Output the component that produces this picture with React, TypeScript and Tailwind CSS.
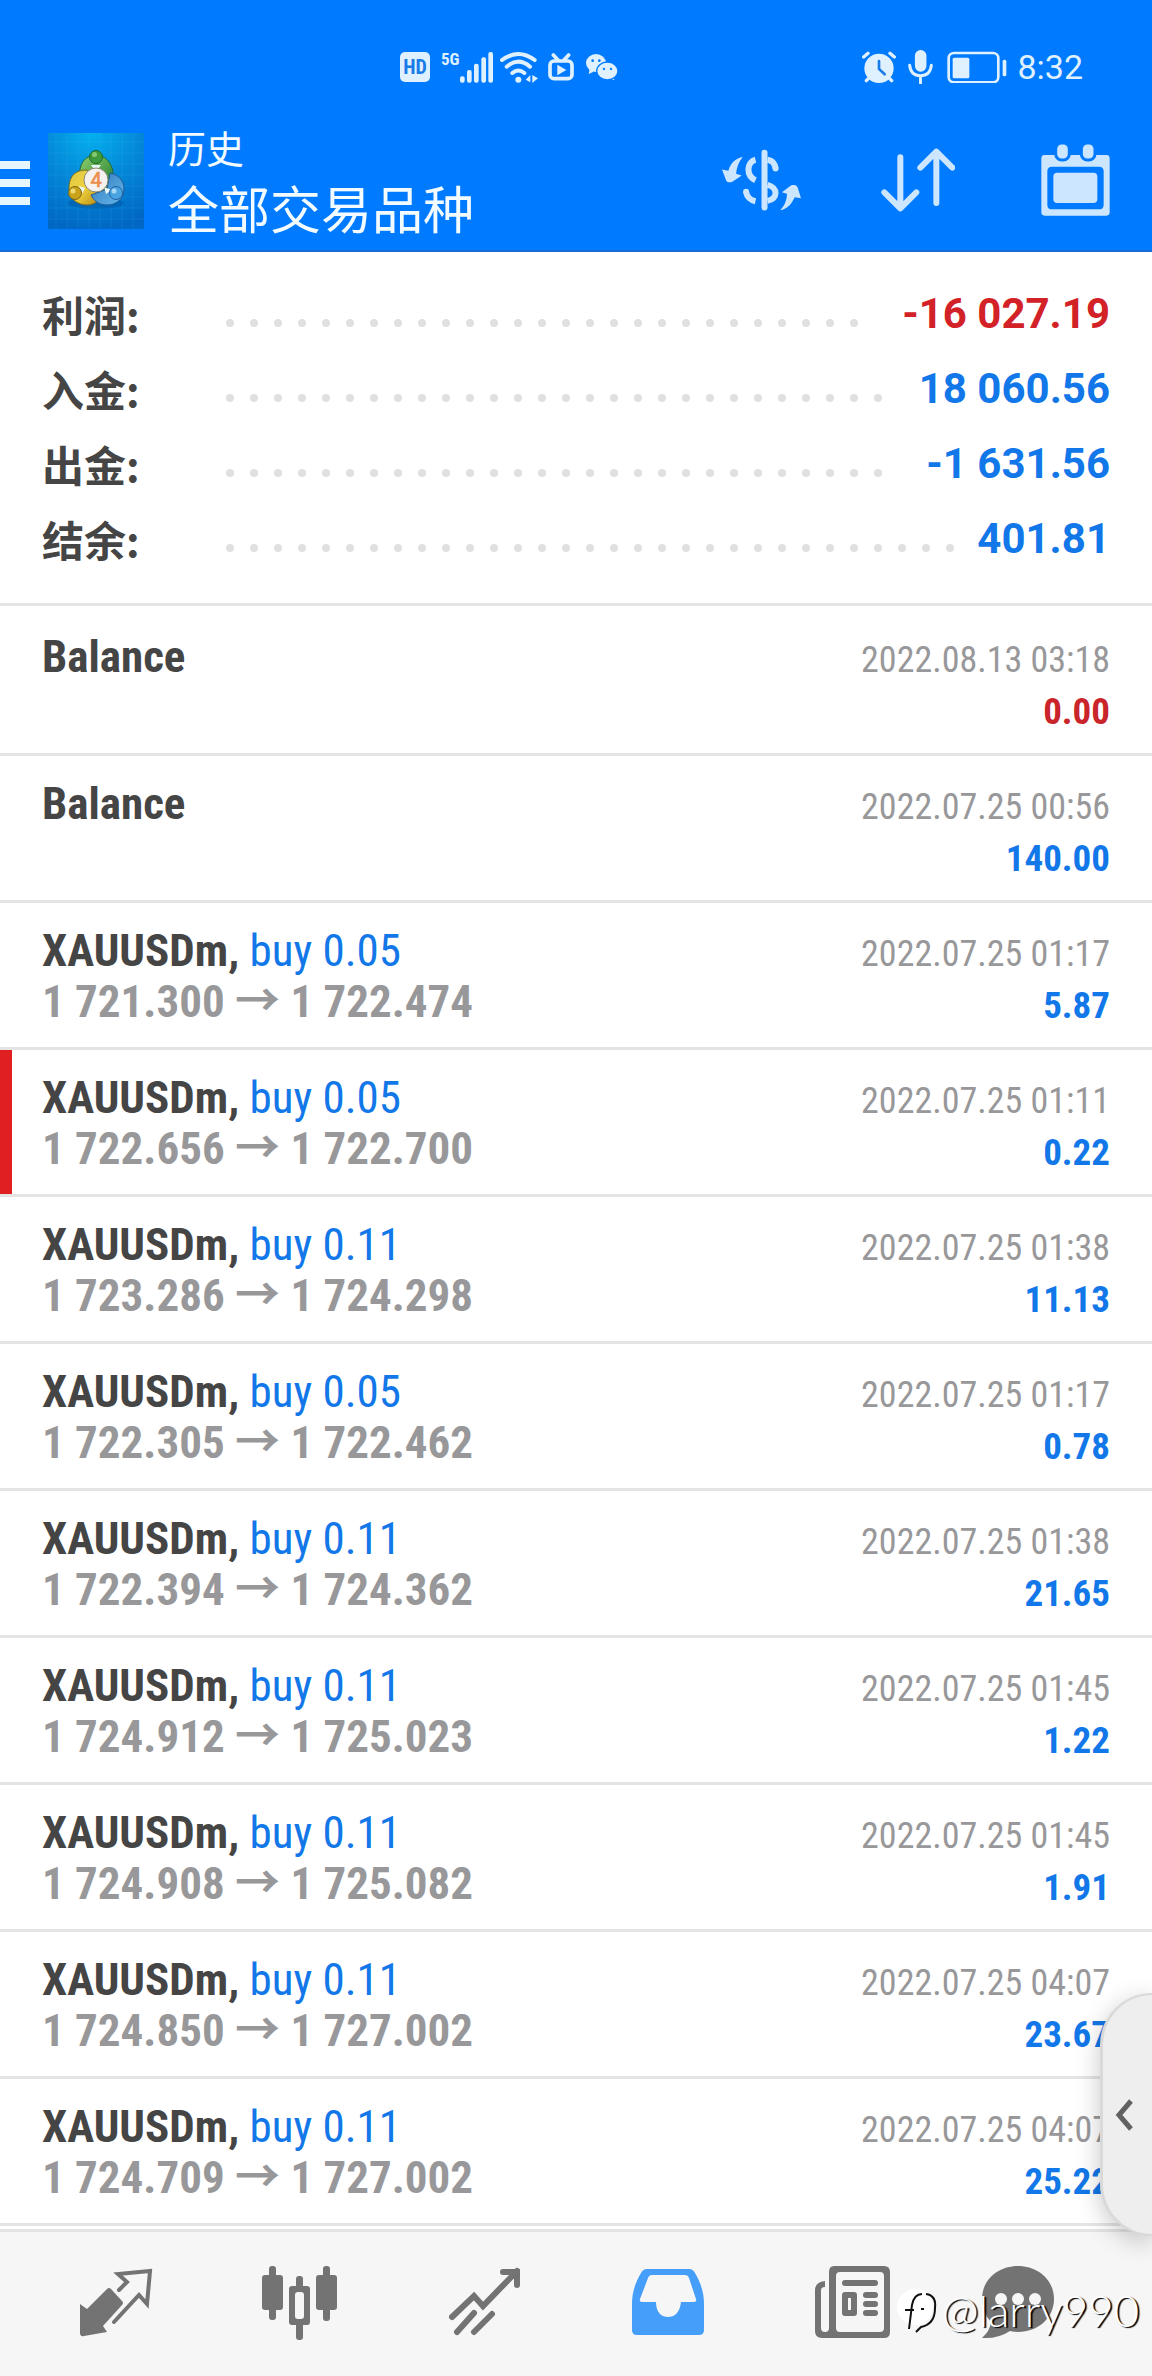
import React from 'react';
import clsx from 'clsx';

interface SummaryItem {
  label: string;
  value: string;
  negative?: boolean;
}

interface HistoryItem {
  id: number;
  title: string;
  action?: string;
  open?: string;
  close?: string;
  time: string;
  profit: string;
  loss?: boolean;
  stopLoss?: boolean;
}

const summary: SummaryItem[] = [
  { label: '利润:', value: '-16 027.19', negative: true },
  { label: '入金:', value: '18 060.56' },
  { label: '出金:', value: '-1 631.56' },
  { label: '结余:', value: '401.81' },
];

const history: HistoryItem[] = [
  { id: 1, title: 'Balance', time: '2022.08.13 03:18', profit: '0.00', loss: true },
  { id: 2, title: 'Balance', time: '2022.07.25 00:56', profit: '140.00' },
  { id: 3, title: 'XAUUSDm,', action: 'buy 0.05', open: '1 721.300', close: '1 722.474', time: '2022.07.25 01:17', profit: '5.87' },
  { id: 4, title: 'XAUUSDm,', action: 'buy 0.05', open: '1 722.656', close: '1 722.700', time: '2022.07.25 01:11', profit: '0.22', stopLoss: true },
  { id: 5, title: 'XAUUSDm,', action: 'buy 0.11', open: '1 723.286', close: '1 724.298', time: '2022.07.25 01:38', profit: '11.13' },
  { id: 6, title: 'XAUUSDm,', action: 'buy 0.05', open: '1 722.305', close: '1 722.462', time: '2022.07.25 01:17', profit: '0.78' },
  { id: 7, title: 'XAUUSDm,', action: 'buy 0.11', open: '1 722.394', close: '1 724.362', time: '2022.07.25 01:38', profit: '21.65' },
  { id: 8, title: 'XAUUSDm,', action: 'buy 0.11', open: '1 724.912', close: '1 725.023', time: '2022.07.25 01:45', profit: '1.22' },
  { id: 9, title: 'XAUUSDm,', action: 'buy 0.11', open: '1 724.908', close: '1 725.082', time: '2022.07.25 01:45', profit: '1.91' },
  { id: 10, title: 'XAUUSDm,', action: 'buy 0.11', open: '1 724.850', close: '1 727.002', time: '2022.07.25 04:07', profit: '23.67' },
  { id: 11, title: 'XAUUSDm,', action: 'buy 0.11', open: '1 724.709', close: '1 727.002', time: '2022.07.25 04:07', profit: '25.22' },
];

const StatusBar = () => (
  <div className="flex h-[108px] items-center justify-between pt-[26px] pr-[69px] pl-[400px] text-[#dff1ff]">
    <div className="flex items-center">
      <span className="flex size-[30px] items-center justify-center rounded-[5px] bg-[#dff1ff] text-[20px] leading-none font-bold text-[#1a7ce8] font-['Roboto_Condensed','Roboto',sans-serif]">
        HD
      </span>
      <span className="ml-[11px] self-start text-[17px] leading-none font-bold font-['Roboto_Condensed','Roboto',sans-serif]">5G</span>
      <svg className="w-[33px]" viewBox="233 66 99 93" fill="currentColor" aria-hidden="true">
        <rect x="233" y="139" width="14" height="19" rx="6" />
        <rect x="254" y="120" width="14" height="38" rx="6" />
        <rect x="275" y="101" width="14" height="57" rx="6" />
        <rect x="297" y="82" width="14" height="76" rx="6" />
        <rect x="318" y="66" width="14" height="92" rx="6" />
      </svg>
      <svg className="ml-[7px] w-[38px]" viewBox="359 62 114 98" fill="none" stroke="currentColor" strokeWidth="12" strokeLinecap="round" aria-hidden="true">
        <path d="M365 89Q414 53 463 89M379 109Q414 79 449 109M396 128Q414 113 432 128" />
        <circle cx="414" cy="148" r="9" fill="currentColor" stroke="none" />
        <path d="M450 134v22l-14-8zM456 134l17 10-17 14z" fill="currentColor" stroke="none" />
      </svg>
      <svg className="ml-[10px] w-[26px]" viewBox="504 68 78 84" fill="none" stroke="currentColor" strokeWidth="11" strokeLinecap="round" aria-hidden="true">
        <rect x="510" y="92" width="66" height="53" rx="12" />
        <path d="M520 74l14 15M566 74l-14 15" />
        <path d="M532 103l27 16-27 16z" fill="currentColor" stroke="none" />
      </svg>
      <svg className="ml-[12px] w-[32px]" viewBox="622 68 96 84" aria-hidden="true">
        <path d="M633 116l-3 15 15-7z" fill="currentColor" />
        <ellipse cx="652" cy="98" rx="30" ry="27" fill="currentColor" />
        <path d="M700 138l8 12-18-6z" fill="currentColor" />
        <ellipse cx="686" cy="122" rx="32" ry="27" fill="currentColor" stroke="#007aff" strokeWidth="4" />
        <g fill="#007aff">
          <circle cx="642" cy="91" r="4" />
          <circle cx="662" cy="91" r="4" />
          <circle cx="676" cy="116" r="3.5" />
          <circle cx="697" cy="116" r="3.5" />
        </g>
      </svg>
    </div>
    <div className="flex items-center">
      <svg className="w-[34px]" viewBox="66 62 102 94" stroke="currentColor" strokeWidth="10" strokeLinecap="round" fill="none" aria-hidden="true">
        <circle cx="117" cy="114" r="44" fill="currentColor" stroke="none" />
        <path d="M71 80l13-11M163 80l-13-11M88 142l-9 9M146 142l9 9" />
        <path d="M117 92v24l17 16" stroke="#1a7ce8" strokeWidth="8" />
      </svg>
      <svg className="ml-[12px] w-[25px]" viewBox="203 60 76 104" fill="none" stroke="currentColor" strokeWidth="9" strokeLinecap="round" aria-hidden="true">
        <rect x="224" y="60" width="35" height="66" rx="17" fill="currentColor" stroke="none" />
        <path d="M208 106c2 22 15 32 33 32s31-10 33-32M241 138v22" />
      </svg>
      <svg className="ml-[14px] w-[60px]" viewBox="320 62 180 98" fill="none" stroke="currentColor" strokeWidth="8" aria-hidden="true">
        <rect x="325" y="68" width="149" height="88" rx="16" />
        <rect x="337" y="82" width="50" height="62" rx="5" fill="currentColor" stroke="none" />
        <rect x="487" y="88" width="11" height="50" rx="5" fill="currentColor" stroke="none" />
      </svg>
      <span className="ml-[10px] text-[34px] leading-none">8:32</span>
    </div>
  </div>
);

const AppLogo = () => (
  <svg className="size-24" viewBox="0 0 96 96" role="img" aria-label="MetaTrader 4">
    <defs>
      <radialGradient id="logo-bg" cx="0.45" cy="0" r="1">
        <stop offset="0" stopColor="#04b0ee" />
        <stop offset="0.5" stopColor="#0488d8" />
        <stop offset="1" stopColor="#0068c4" />
      </radialGradient>
      <linearGradient id="logo-green" x1="0" y1="0" x2="1" y2="1">
        <stop offset="0" stopColor="#8fd070" />
        <stop offset="1" stopColor="#1f7a2a" />
      </linearGradient>
      <linearGradient id="logo-yellow" x1="0" y1="0" x2="1" y2="1">
        <stop offset="0" stopColor="#d8c84a" />
        <stop offset="0.5" stopColor="#f2d23c" />
        <stop offset="1" stopColor="#b08a18" />
      </linearGradient>
      <linearGradient id="logo-blue" x1="0" y1="0" x2="1" y2="1">
        <stop offset="0" stopColor="#2f78b8" />
        <stop offset="1" stopColor="#66b8ee" />
      </linearGradient>
    </defs>
    <rect width="96" height="96" fill="url(#logo-bg)" />
    <path
      d="M8 0v96M19 0v96M30 0v96M41 0v96M52 0v96M63 0v96M74 0v96M85 0v96M0 9h96M0 20h96M0 31h96M0 42h96M0 53h96M0 64h96M0 75h96M0 86h96"
      stroke="#5cc8f5"
      strokeOpacity="0.12"
    />
    <ellipse cx="48" cy="70" rx="28" ry="6" fill="#004a90" fillOpacity="0.35" />
    <path d="M32 45C30 30 38 22 48 22s19 10 17 26l-8 10H40z" fill="url(#logo-green)" stroke="#1c6a38" />
    <path d="M39 37c-16 0-18 11-18 19 0 10 9 16 18 16 5 0 9-2 12-5L43 45z" fill="url(#logo-yellow)" stroke="#7a6a20" />
    <path d="M62 40c10 2 14 9 14 16 0 10-8 16-17 16-8 0-13-4-16-10l16-6z" fill="url(#logo-blue)" stroke="#1d5a94" />
    <path d="M43 32l10 0-5 7zM31 53l6 2-3 6zM56 54l8 3-6 4z" fill="#e8f6f8" />
    <circle cx="48" cy="24" r="6.5" fill="#3f9a3c" stroke="#1f6a2c" />
    <circle cx="46.5" cy="21.5" r="2.5" fill="#a4dc8c" fillOpacity="0.7" />
    <circle cx="27" cy="60" r="6.5" fill="#c9a21c" stroke="#7d6414" />
    <circle cx="25" cy="58" r="2.5" fill="#f7e88c" fillOpacity="0.8" />
    <circle cx="68" cy="60" r="6.5" fill="#4aa4e2" stroke="#1d62a4" />
    <circle cx="66" cy="58" r="2.5" fill="#bfe4fa" fillOpacity="0.8" />
    <circle cx="48" cy="47" r="12" fill="#f4f1ee" stroke="#8a8a70" />
    <text x="48" y="54" textAnchor="middle" fontSize="20" fontFamily="Roboto, sans-serif" fill="#ec8d4c" stroke="#ec8d4c" strokeWidth="0.6">
      4
    </text>
  </svg>
);

const Toolbar = () => (
  <div className="flex h-[144px] items-center border-b-2 border-[#1b6bd3] pt-[3px] pr-[42px]">
    <button type="button" aria-label="菜单" className="flex w-[30px] flex-col gap-[10px] pt-1">
      <span className="h-2 bg-[#e6f6ff]" />
      <span className="h-2 bg-[#e6f6ff]" />
      <span className="h-2 bg-[#e6f6ff]" />
    </button>
    <div className="ml-[18px]">
      <AppLogo />
    </div>
    <div className="ml-6 flex-1 pb-2 whitespace-nowrap text-[#f2fbff] font-['Noto_Sans_CJK_SC',sans-serif]">
      <p className="text-[38px] leading-[60px]">历史</p>
      <h1 className="text-[51px] leading-[60px]">全部交易品种</h1>
    </div>
    <div className="flex items-center gap-20 text-[#cde6ff]">
      <button type="button" aria-label="货币">
        <svg className="w-[79px]" viewBox="98 78 236 192" fill="none" stroke="currentColor" strokeWidth="18">
          <path d="M225 92v164" strokeLinecap="round" />
          <path d="M198 113c-27 7-29 48 0 61M234 188c32 8 32 42 0 48" />
          <path d="M170 209c2 15 14 25 28 28M234 113c14 2 22 11 24 26" />
          <circle cx="170" cy="209" r="9" fill="currentColor" stroke="none" />
          <circle cx="258" cy="139" r="9" fill="currentColor" stroke="none" />
          <path
            d="M160 105c-20 3-36 17-43 41l-19-4 12 32c4 8 12 8 20 4l27-18-17-5c2-20 8-35 20-50zM272 264c20-3 34-18 43-39l19 3-10-32c-4-8-12-8-20-6l-27 20 15 5c0 20-8 37-20 49z"
            fill="currentColor"
            stroke="none"
          />
        </svg>
      </button>
      <button type="button" aria-label="排序">
        <svg className="w-[74px]" viewBox="572 82 222 192" fill="none" stroke="currentColor" strokeWidth="18" strokeLinecap="round" strokeLinejoin="round">
          <path d="M630 110v153M582 215l48 48 48-48M738 247V93M690 141l48-48 48 48" />
        </svg>
      </button>
      <button type="button" aria-label="日期" className="ml-[6px]">
        <svg className="w-[69px]" viewBox="1049 69 207 217" fill="currentColor">
          <path fillRule="evenodd" d="M1060 102h185q10 0 10 10v162q0 10-10 10h-185q-10 0-10-10V112q0-10 10-10zm22 35q-14 0-14 14v100q0 14 14 14h141q14 0 14-14V151q0-14-14-14z" />
          <rect x="1086" y="155" width="132" height="91" rx="12" />
          <rect x="1093" y="66" width="41" height="51" rx="18" stroke="#007aff" strokeWidth="9" />
          <rect x="1170" y="66" width="41" height="51" rx="18" stroke="#007aff" strokeWidth="9" />
        </svg>
      </button>
    </div>
  </div>
);

// the leader only shows whole dots, the rest wraps out of sight
const DotLeader = () => (
  <span aria-hidden="true" className="mt-[18px] mr-[22px] flex h-2 flex-1 flex-wrap gap-4 overflow-hidden">
    {Array.from({ length: 60 }, (_, i) => (
      <span key={i} className="size-2 rounded-full bg-[#e0e0e0]" />
    ))}
  </span>
);

const Summary = () => (
  <dl className="border-b-[3px] border-[#e4e4e4] px-[42px] pt-6 pb-[27px]">
    {summary.map((item) => (
      <div key={item.label} className="flex h-[75px] items-center">
        <dt className="w-[184px] text-[42px] leading-[75px] font-bold text-[#454545] font-['Noto_Sans_CJK_SC',sans-serif]">
          {item.label}
        </dt>
        <DotLeader />
        <dd className={clsx('text-[42px] leading-[75px] font-bold', item.negative ? 'text-[#d22227]' : 'text-[#1277e8]')}>
          {item.value}
        </dd>
      </div>
    ))}
  </dl>
);

const HistoryRow: React.FC<{ item: HistoryItem }> = ({ item }) => (
  <li className="flex h-[147px] border-b-[3px] border-[#e4e4e4]">
    <span className={clsx('w-3', item.stopLoss && 'bg-[#e01f21]')} />
    <div className="flex flex-1 items-baseline justify-between pt-[22px] pr-[42px] pl-[30px] whitespace-nowrap">
      <div className="text-[45px] leading-[51px]">
        <p className="font-bold text-[#454545]">
          {item.title}
          {item.action && <span className="font-normal text-[#1277e8]"> {item.action}</span>}
        </p>
        {item.open && (
          <p className="font-bold text-[#98989a]">
            {item.open} → {item.close}
          </p>
        )}
      </div>
      <div className="text-right leading-[51px]">
        <p className="text-[36px] text-[#98989a]">{item.time}</p>
        <p className={clsx('text-[37px] font-bold', item.loss ? 'text-[#c9252a]' : 'text-[#1277e8]')}>{item.profit}</p>
      </div>
    </div>
  </li>
);

const TabBar = () => (
  <nav className="mt-[3px] grid h-[147px] grid-cols-6 items-start border-t-[3px] border-[#e2e3e2] bg-[#f6f6f6] px-6 pt-8 text-[#737373]">
    <button type="button" aria-label="行情" className="flex justify-center">
      <svg className="h-[78px] w-[76px]" viewBox="0 0 76 78" fill="none" stroke="currentColor" strokeWidth="4">
        <path d="M2 40v30q1 3 4 2l23-4-4-6 19-21q2-2 0-4L33 25q-2-2-4 0L9 45z" fill="currentColor" stroke="none" />
        <path d="M41 26l8-8-9-8 32-3-3 33-8-9-25 27" strokeLinecap="round" />
      </svg>
    </button>
    <button type="button" aria-label="图表" className="flex justify-center">
      <svg className="h-[78px] w-[76px]" viewBox="0 0 76 78" fill="currentColor">
        <rect x="0" y="11" width="21" height="35" rx="3" />
        <rect x="7" y="2" width="7" height="54" rx="3" />
        <rect x="54" y="11" width="21" height="35" rx="3" />
        <rect x="61" y="2" width="7" height="55" rx="3" />
        <rect x="34" y="12" width="7" height="12" rx="3" />
        <rect x="34" y="58" width="7" height="18" rx="3" />
        <path fillRule="evenodd" d="M30 22h15q3 0 3 3v33q0 3-3 3H30q-3 0-3-3V25q0-3 3-3zm6 6q-3 0-3 3v21q0 3 3 3h3q3 0 3-3V31q0-3-3-3z" />
      </svg>
    </button>
    <button type="button" aria-label="交易" className="flex justify-center">
      <svg className="h-[78px] w-[76px]" viewBox="0 0 76 78" fill="none" stroke="currentColor" strokeWidth="6" strokeLinecap="round">
        <path d="M6 53l22-21 9 10 34-35M57 8h14v13M11 68l17-19M28 68l18-18" />
      </svg>
    </button>
    <button type="button" aria-label="历史" aria-current="page" className="flex justify-center text-[#459ef9]">
      <svg className="h-[78px] w-[76px]" viewBox="0 0 76 78" fill="currentColor">
        <path
          fillRule="evenodd"
          d="M17 5h42q4 0 6 4c6 10 9 20 9 31v26q0 5-5 5H7q-5 0-5-5V40c0-11 3-21 9-31q2-4 6-4zm5 6q-3 0-4 3L10 35q-1 3 2 3h14c0 11 6 15 12 15s12-4 13-15h13q3 0 2-3l-7-21q-1-3-4-3z"
        />
      </svg>
    </button>
    <button type="button" aria-label="新闻" className="flex justify-center">
      <svg className="h-[78px] w-[76px]" viewBox="0 0 76 78" fill="currentColor">
        <path fillRule="evenodd" d="M20 2h50q6 0 6 6v60q0 6-6 6H8q-7 0-7-7V26q0-8 10-9v6q-4 0-4 3v38q0 4 4 4 4 0 4-4V8q0-6 5-6zm6 6q-4 0-4 4v52q0 4 4 4h40q4 0 4-4V12q0-4-4-4z" />
        <rect x="28" y="16" width="36" height="6" rx="3" />
        <path fillRule="evenodd" d="M31 28h9q3 0 3 3v18q0 3-3 3h-9q-3 0-3-3V31q0-3 3-3zm3 6v12h3V34z" />
        <rect x="49" y="28" width="15" height="6" rx="3" />
        <rect x="49" y="37" width="15" height="6" rx="3" />
        <rect x="49" y="46" width="15" height="6" rx="3" />
      </svg>
    </button>
    <button type="button" aria-label="消息" className="flex justify-center pr-9">
      <svg className="h-[78px] w-[76px]" viewBox="0 0 76 78">
        <path d="M38 2c20 0 36 14 36 33S58 68 38 68q-4 0-8-1-12 8-28 7 8-7 9-16Q2 48 2 35C2 16 18 2 38 2z" fill="currentColor" />
        <circle cx="21" cy="35" r="6" fill="#f6f6f6" />
        <circle cx="38" cy="35" r="6" fill="#f6f6f6" />
        <circle cx="55" cy="35" r="6" fill="#f6f6f6" />
      </svg>
    </button>
  </nav>
);

const Watermark = () => (
  <div className="pointer-events-none absolute right-[13px] bottom-[39px] flex items-center gap-1">
    <svg className="w-[42px]" viewBox="0 0 42 48" fill="none" aria-hidden="true">
      <circle cx="19" cy="21" r="18" fill="#ffffff" />
      <path d="M26 8c-7 0-9 6-10 11l-3 24M9 24h9M25 23h3M30 8c7 1 10 6 9 14 0 11-4 17-14 19l-5 5" stroke="#111111" strokeWidth="2" />
    </svg>
    <span className="text-[44px] leading-[54px] font-light text-white [text-shadow:2px_1px_1px_#000000] font-['Lato',sans-serif]">
      @larry990
    </span>
  </div>
);

export default function App() {
  return (
    <div className="relative min-h-screen overflow-hidden bg-white font-['Roboto','Noto_Sans_CJK_SC',sans-serif]">
      <header className="bg-[#007aff]">
        <StatusBar />
        <Toolbar />
      </header>
      <main>
        <Summary />
        <ul className="pt-[3px] font-['Roboto_Condensed','Roboto','Noto_Sans_CJK_SC',sans-serif]">
          {history.map((item) => (
            <HistoryRow key={item.id} item={item} />
          ))}
        </ul>
      </main>
      <TabBar />
      <button
        type="button"
        aria-label="展开侧边栏"
        className="absolute right-0 bottom-[140px] flex h-[243px] w-[52px] items-center rounded-l-[52px] border-y-2 border-l-[3px] border-[#d9d9d9] bg-[#eeeeee] pl-3 shadow-[0_6px_24px_rgba(0,0,0,0.22)]"
      >
        <svg className="w-[18px]" viewBox="0 0 18 32" fill="none" stroke="#616161" strokeWidth="5">
          <path d="M16 2L4 16l12 14" />
        </svg>
      </button>
      <Watermark />
    </div>
  );
}
